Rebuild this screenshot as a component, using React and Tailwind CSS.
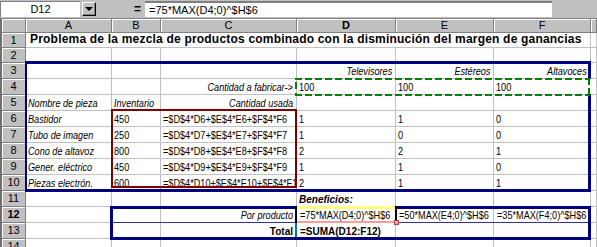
import React from "react";

const GRID = "grid grid-cols-[26px_86px_49px_136px_99px_98px_97px_6px]";
const BOLD = "text-[10px] font-bold";

function Cell({ children, right = false, className = "", bold = false, italic = false }) {
  const textClass = bold
    ? `${BOLD} ${italic ? "italic" : ""}`
    : `text-[11px] inline-block scale-x-[0.83] ${right ? "origin-right" : "origin-left"} ${italic ? "italic" : ""}`;
  return (
    <div
      className={`flex items-end overflow-hidden whitespace-nowrap border-r border-b border-[#c0c0c0] bg-white ${
        right ? "justify-end pr-[3px]" : "justify-start pl-[2px]"
      } ${className}`}
    >
      <span className={`shrink-0 leading-none pb-[1px] ${textClass}`}>{children}</span>
    </div>
  );
}

function RowHead({ n, active = false }) {
  return (
    <div
      className={`flex items-center justify-center bg-[#c0c0c0] border-r border-b border-[#808080] border-l-2 border-l-[#707070] shadow-[inset_1px_1px_0_#ffffff] text-[11px] leading-none ${
        active ? "font-bold" : ""
      }`}
    >
      {n}
    </div>
  );
}

function ColHead({ children, active = false }) {
  return (
    <div
      className={`flex items-center justify-center bg-[#c0c0c0] border-r border-b border-[#808080] shadow-[inset_1px_1px_0_#ffffff] text-[11px] leading-none ${
        active ? "font-bold" : ""
      }`}
    >
      {children}
    </div>
  );
}

const items = [
  ["Bastidor", "450", 6, "1", "1", "0"],
  ["Tubo de imagen", "250", 7, "1", "0", "0"],
  ["Cono de altavoz", "800", 8, "2", "2", "1"],
  ["Gener. eléctrico", "450", 9, "1", "1", "0"],
  ["Piezas electrón.", "600", 10, "2", "1", "1"],
];

export default function App() {
  return (
    <div className="relative w-[597px] h-[247px] overflow-hidden bg-white text-black font-['Liberation_Sans',Arial,sans-serif]">
      {/* Formula bar */}
      <div className="h-[18px] bg-[#c0c0c0] flex items-start">
        <div className="mt-[1px] h-[16px] w-[80px] bg-white border-t border-l border-[#808080] flex items-center justify-center text-[11px] leading-none">
          D12
        </div>
        <div className="mt-[2px] ml-[2px] h-[14px] w-[14px] bg-[#c0c0c0] border border-t-white border-l-white border-r-black border-b-black shadow-[inset_-1px_-1px_0_#808080] flex items-center justify-center">
          <div className="w-0 h-0 border-x-[4px] border-x-transparent border-t-[4px] border-t-black" />
        </div>
        <div className="ml-[38px] mt-[2px] text-[12px] font-bold leading-[14px]">=</div>
        <div className="ml-[4px] mt-[1px] h-[16px] w-[407px] bg-white border-t-2 border-[#808080] flex items-center pl-[4px] text-[11px] leading-none">
          =75*MAX(D4;0)^$H$6
        </div>
      </div>

      {/* Column headers */}
      <div className={`${GRID} h-[15px] border-t border-[#808080]`}>
        <div className="bg-[#c0c0c0] border-r border-b border-[#808080] border-l-2 border-l-[#707070] shadow-[inset_1px_1px_0_#ffffff]" />
        <ColHead>A</ColHead>
        <ColHead>B</ColHead>
        <ColHead>C</ColHead>
        <ColHead active>D</ColHead>
        <ColHead>E</ColHead>
        <ColHead>F</ColHead>
        <ColHead />
      </div>

      {/* Row 1 */}
      <div className={`${GRID} h-[15px]`}>
        <RowHead n="1" />
        <div className="col-span-6 flex items-end pl-[4px] border-r border-b border-[#c0c0c0] whitespace-nowrap">
          <span className="text-[12px] font-bold leading-none pb-[2px] tracking-[0.2px]">
            Problema de la mezcla de productos combinado con la disminución del margen de ganancias
          </span>
        </div>
        <Cell />
      </div>

      {/* Row 2 */}
      <div className={`${GRID} h-[15px]`}>
        <RowHead n="2" />
        <Cell /><Cell /><Cell /><Cell /><Cell /><Cell /><Cell />
      </div>

      {/* Row 3 */}
      <div className={`${GRID} h-[16px]`}>
        <RowHead n="3" />
        <Cell /><Cell /><Cell />
        <Cell right italic>Televisores</Cell>
        <Cell right italic>Estéreos</Cell>
        <Cell right italic>Altavoces</Cell>
        <Cell />
      </div>

      {/* Row 4 */}
      <div className={`${GRID} h-[16px]`}>
        <RowHead n="4" />
        <Cell /><Cell />
        <Cell right italic>Cantidad a fabricar-&gt;</Cell>
        <Cell>100</Cell>
        <Cell>100</Cell>
        <Cell>100</Cell>
        <Cell />
      </div>

      {/* Row 5 */}
      <div className={`${GRID} h-[16px]`}>
        <RowHead n="5" />
        <Cell italic>Nombre de pieza</Cell>
        <Cell italic>Inventario</Cell>
        <Cell right italic>Cantidad usada</Cell>
        <Cell /><Cell /><Cell /><Cell />
      </div>

      {/* Rows 6-10 */}
      {items.map(([name, inv, r, d, e, f]) => (
        <div key={r} className={`${GRID} h-[16px]`}>
          <RowHead n={String(r)} />
          <Cell italic>{name}</Cell>
          <Cell>{inv}</Cell>
          <Cell>{`=$D$4*D${r}+$E$4*E${r}+$F$4*F${r}`}</Cell>
          <Cell>{d}</Cell>
          <Cell>{e}</Cell>
          <Cell>{f}</Cell>
          <Cell />
        </div>
      ))}

      {/* Row 11 */}
      <div className={`${GRID} h-[16px]`}>
        <RowHead n="11" />
        <Cell /><Cell /><Cell />
        <Cell bold italic>Beneficios:</Cell>
        <Cell /><Cell /><Cell />
      </div>

      {/* Row 12 */}
      <div className={`${GRID} h-[16px]`}>
        <RowHead n="12" active />
        <Cell /><Cell />
        <Cell right italic>Por producto</Cell>
        <Cell className="pl-[3px]">=75*MAX(D4;0)^$H$6</Cell>
        <Cell className="pl-[3px]">=50*MAX(E4;0)^$H$6</Cell>
        <Cell className="pl-[3px]">=35*MAX(F4;0)^$H$6</Cell>
        <Cell />
      </div>

      {/* Row 13 */}
      <div className={`${GRID} h-[16px]`}>
        <RowHead n="13" />
        <Cell /><Cell />
        <Cell right bold>Total</Cell>
        <Cell className="pl-[3px]" bold>=SUMA(D12:F12)</Cell>
        <Cell /><Cell /><Cell />
      </div>

      {/* Row 14 */}
      <div className={`${GRID} h-[16px]`}>
        <RowHead n="14" />
        <Cell /><Cell /><Cell /><Cell /><Cell /><Cell /><Cell />
      </div>

      {/* Overlay borders */}
      <div className="pointer-events-none absolute left-[25px] top-[61px] w-[566px] h-[131px] border-[3px] border-l-[2px] border-[#000080]" />
      <div className="pointer-events-none absolute left-[111px] top-[109px] w-[186px] h-[79px] border-2 border-[#800000]" />

      {/* Green dashed copy marquee D4:F4 */}
      <div className="pointer-events-none absolute left-[295px] top-[78px] w-[295px] h-[2px] bg-[repeating-linear-gradient(90deg,#008000_0_7px,transparent_7px_10px)]" />
      <div className="pointer-events-none absolute left-[295px] top-[94px] w-[295px] h-[2px] bg-[repeating-linear-gradient(90deg,#008000_0_7px,transparent_7px_10px)]" />
      <div className="pointer-events-none absolute left-[295px] top-[78px] w-[2px] h-[18px] bg-[repeating-linear-gradient(180deg,transparent_0_4px,#008000_4px_11px)]" />
      <div className="pointer-events-none absolute left-[588px] top-[79px] w-[3px] h-[15px] bg-white" />
      <div className="pointer-events-none absolute left-[588px] top-[78px] w-[2px] h-[18px] bg-[repeating-linear-gradient(180deg,#008000_0_7px,transparent_7px_10px)]" />

      {/* Beneficios box B12:F13 */}
      <div className="pointer-events-none absolute left-[110px] top-[206px] w-[481px] h-[34px] border-[3px] border-[#000080]" />
      <div className="pointer-events-none absolute left-[113px] top-[222px] w-[475px] h-px bg-[#3030a0]" />

      {/* Active cell D12 */}
      <div className="pointer-events-none absolute left-[297px] top-[206px] w-[98px] h-[3px] bg-[#ffff80]" />
      <div className="pointer-events-none absolute left-[297px] top-[221px] w-[98px] h-[2px] bg-[#ff9c9c]" />
      <div className="pointer-events-none absolute left-[295px] top-[206px] w-[2px] h-[17px] bg-black" />
      <div className="pointer-events-none absolute left-[395px] top-[206px] w-[2px] h-[16px] bg-black" />
      <div className="pointer-events-none absolute left-[394px] top-[220px] w-[5px] h-[5px] bg-[#ff9c9c] border border-[#a05050]" />
      <div className="pointer-events-none absolute left-[295px] top-[223px] w-[2px] h-[14px] bg-[#008080]" />
    </div>
  );
}
